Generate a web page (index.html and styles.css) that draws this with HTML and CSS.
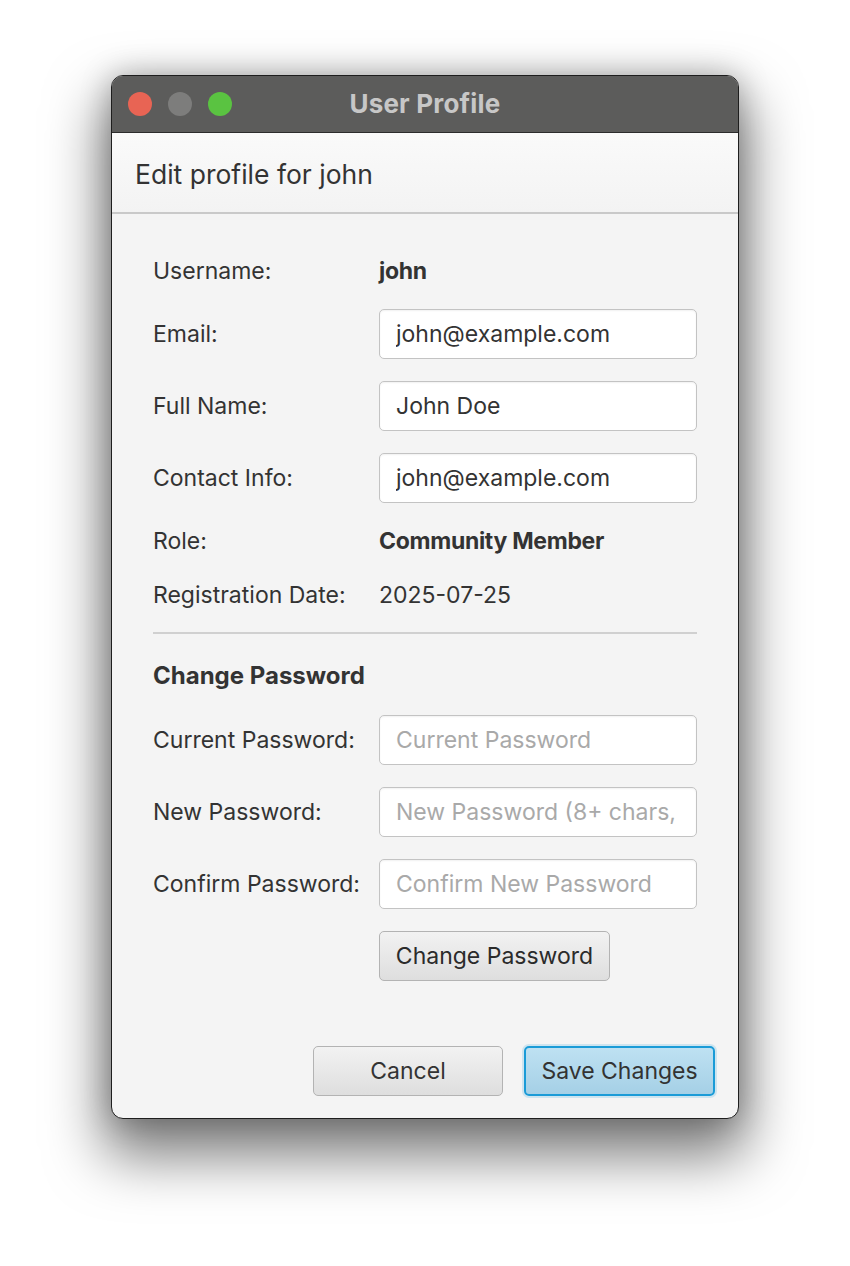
FILE: index.html
```html
<!DOCTYPE html>
<html>
<head>
<meta charset="utf-8">
<link rel="stylesheet" href="styles.css">
</head>
<body>
<div class="window">
  <div class="titlebar">
    <div class="lights">
      <span class="light red"></span>
      <span class="light gray"></span>
      <span class="light green"></span>
    </div>
    <div class="title">User Profile</div>
  </div>
  <div class="header">Edit profile for john</div>
  <div class="content">
    <div class="grid">
      <div class="label text-row">Username:</div>
      <div class="value bold text-row">john</div>

      <div class="label">Email:</div>
      <div class="input"><span class="field-text">john@example.com</span></div>

      <div class="label">Full Name:</div>
      <div class="input"><span class="field-text">John Doe</span></div>

      <div class="label">Contact Info:</div>
      <div class="input"><span class="field-text">john@example.com</span></div>

      <div class="label text-row">Role:</div>
      <div class="value bold text-row">Community Member</div>

      <div class="label text-row">Registration Date:</div>
      <div class="value text-row">2025-07-25</div>
    </div>

    <div class="separator"></div>

    <div class="section-title">Change Password</div>

    <div class="grid">
      <div class="label">Current Password:</div>
      <div class="input placeholder"><span class="field-text">Current Password</span></div>

      <div class="label">New Password:</div>
      <div class="input placeholder"><span class="field-text">New Password (8+ chars, letters &amp; numbers)</span></div>

      <div class="label">Confirm Password:</div>
      <div class="input placeholder"><span class="field-text">Confirm New Password</span></div>

      <div class="label"></div>
      <div class="btn-cell"><div class="btn change">Change Password</div></div>
    </div>
  </div>
  <div class="footer">
    <div class="btn cancel">Cancel</div>
    <div class="btn primary">Save Changes</div>
  </div>
</div>
</body>
</html>
```

FILE: styles.css
```css
* { box-sizing: border-box; }

html, body {
  margin: 0;
  padding: 0;
  background: #ffffff;
}

body {
  font-family: Inter, "Liberation Sans", sans-serif;
  color: #333333;
  width: 850px;
  height: 1266px;
  overflow: hidden;
}

.window {
  margin: 75px 0 0 111px;
  width: 628px;
  height: 1044px;
  border: 1px solid #1e1e1e;
  border-radius: 12px;
  overflow: hidden;
  background: #f4f4f4;
  display: flex;
  flex-direction: column;
  box-shadow: 0 30px 56px 8px rgba(0, 0, 0, 0.5), 0 0 30px rgba(0, 0, 0, 0.25);
}

.titlebar {
  height: 57px;
  flex: none;
  background: #5c5c5b;
  border-bottom: 1px solid #2c2c2c;
  display: flex;
  align-items: center;
  justify-content: center;
  position: relative;
}

.lights {
  position: absolute;
  left: 16px;
  top: 16px;
  display: flex;
  gap: 16px;
}

.light {
  width: 24px;
  height: 24px;
  border-radius: 50%;
  display: block;
}
.light.red { background: #e86454; }
.light.gray { background: #7d7d7c; }
.light.green { background: #5ac341; }

.title {
  font-weight: 700;
  font-size: 26px;
  color: #c7c7c7;
  letter-spacing: 0.2px;
  margin-top: -2px;
}

.header {
  flex: none;
  height: 81px;
  padding: 2px 0 0 23px;
  display: flex;
  align-items: center;
  font-size: 26.5px;
  letter-spacing: 0;
  color: #333;
  background: linear-gradient(#fafafa, #f3f3f3);
  border-bottom: 2px solid #c9c9c9;
}

.content {
  flex: 1;
  padding: 41px 41px 0 41px;
}

.grid {
  display: grid;
  grid-template-columns: 226px 318px;
  row-gap: 22px;
  align-items: center;
}

.label, .value {
  font-size: 23px;
  letter-spacing: 0;
  color: #333;
  white-space: nowrap;
}

.text-row {
  height: 32px;
  line-height: 32px;
}

.bold {
  font-weight: 700;
  letter-spacing: -0.3px;
}

.input {
  height: 50px;
  background: #ffffff;
  border: 1px solid #c3c3c3;
  border-radius: 5px;
  box-shadow: inset 0 1px 2px rgba(0, 0, 0, 0.06);
  padding: 0 13px 0 16px;
  display: flex;
  align-items: center;
  font-size: 23px;
  letter-spacing: 0;
  color: #333;
}

.field-text {
  display: block;
  width: 100%;
  white-space: nowrap;
  overflow: hidden;
}

.input.placeholder {
  color: #a9a9a9;
}

.separator {
  height: 2px;
  background: #d0d0d0;
  margin: 21px 0 0 0;
  width: 544px;
}

.section-title {
  font-size: 24px;
  font-weight: 700;
  letter-spacing: 0;
  color: #333;
  height: 37px;
  line-height: 40px;
  margin-top: 22px;
  margin-bottom: 22px;
}

.btn-cell {
  display: flex;
}

.btn {
  height: 50px;
  display: flex;
  align-items: center;
  justify-content: center;
  font-size: 23px;
  letter-spacing: 0;
  color: #333;
  border: 1px solid #b3b3b3;
  border-radius: 5px;
  background: linear-gradient(#f2f2f2, #dedede);
  white-space: nowrap;
}

.btn.change {
  width: 231px;
  color: #2b2b2b;
}

.footer {
  flex: none;
  display: flex;
  justify-content: flex-end;
  gap: 21px;
  padding: 0 23px 22px 0;
}

.btn.cancel {
  width: 190px;
}

.btn.primary {
  width: 191px;
  border: 2px solid #1a9bd7;
  background: linear-gradient(#bee1f2, #a5d0e6);
  box-shadow: 0 0 0 2px rgba(26, 155, 215, 0.18);
}
```
